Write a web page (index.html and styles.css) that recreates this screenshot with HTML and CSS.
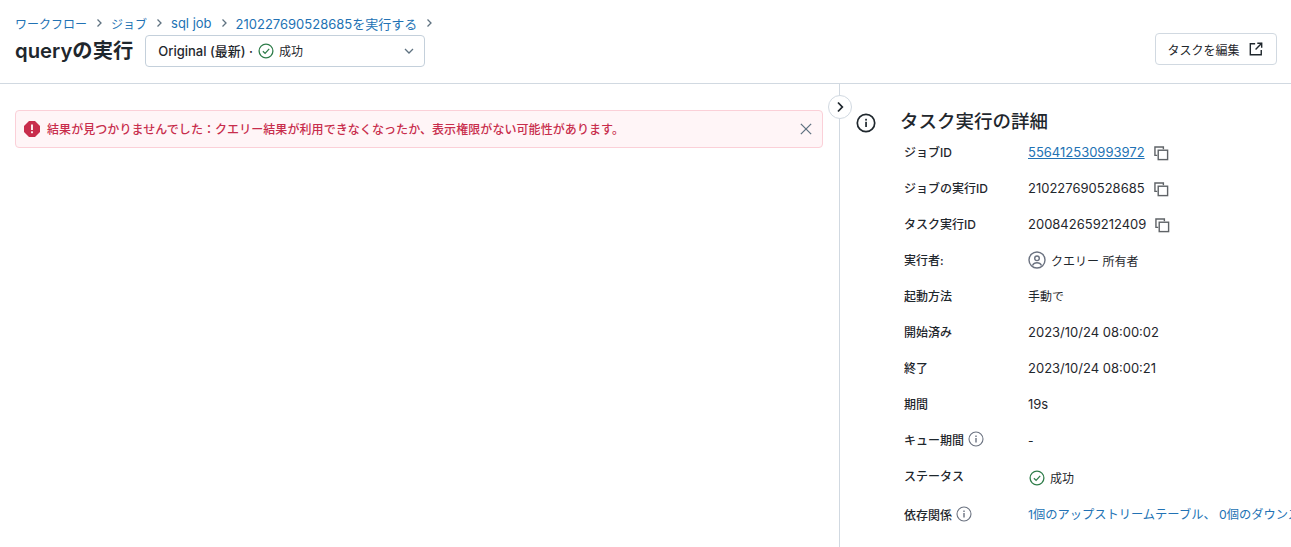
FILE: index.html
```html
<!DOCTYPE html>
<html lang="ja">

<head>
    <meta charset="utf-8">
    <title>queryの実行</title>
    <link rel="stylesheet" href="styles.css">
</head>

<body>
    <header class="page_header">
        <div class="header_left">
            <nav class="crumbs">
                <a class="link">ワークフロー</a>
                <svg class="crumb_sep" viewBox="0 0 8 10"><path d="M2.5 1.5 6 5 2.5 8.5"/></svg>
                <a class="link">ジョブ</a>
                <svg class="crumb_sep" viewBox="0 0 8 10"><path d="M2.5 1.5 6 5 2.5 8.5"/></svg>
                <a class="link big_text">sql job</a>
                <svg class="crumb_sep" viewBox="0 0 8 10"><path d="M2.5 1.5 6 5 2.5 8.5"/></svg>
                <a class="link big_text">210227690528685を実行する</a>
                <svg class="crumb_sep" viewBox="0 0 8 10"><path d="M2.5 1.5 6 5 2.5 8.5"/></svg>
            </nav>
            <div class="title_row">
                <h1>queryの実行</h1>
                <div class="run_select">
                    <span class="run_name">Original (最新) ·</span>
                    <svg class="ok_icon" viewBox="0 0 16 16"><circle cx="8" cy="8" r="6.9"/><path d="M4.9 8.2 7.1 10.4 11.2 5.9"/></svg>
                    <span class="run_status">成功</span>
                    <svg class="select_arrow" viewBox="0 0 10 6"><path d="M1 1 5 5 9 1"/></svg>
                </div>
            </div>
        </div>
        <button class="edit_button" type="button">
            タスクを編集
            <svg class="open_icon" viewBox="0 0 16 16"><path d="M7 2H1.500V14.500H14V9"/><path d="M9.500 1.500H14.500V6.500"/><path d="M14.500 1.500 7.500 8.500"/></svg>
        </button>
    </header>

    <main class="content">
        <section class="left_pane">
            <div class="alert">
                <svg class="alert_icon" viewBox="0 0 16 16"><path class="alert_shape" d="M5 0H11L16 5V11L11 16H5L0 11V5Z"/><rect class="alert_mark" x="7.100" y="3.500" width="1.800" height="5.500"/><rect class="alert_mark" x="7.100" y="10.300" width="1.800" height="1.900"/></svg>
                <span class="alert_text">結果が見つかりませんでした：クエリー結果が利用できなくなったか、表示権限がない可能性があります。</span>
                <svg class="alert_close" viewBox="0 0 14 14"><path d="M1 1 13 13M13 1 1 13"/></svg>
            </div>
        </section>

        <aside class="right_pane">
            <button class="collapse_button" type="button">
                <svg viewBox="0 0 8 12"><path d="M2 1.500 6.300 6 2 10.500"/></svg>
            </button>
            <div class="details_head">
                <svg class="head_icon" viewBox="0 0 20 20"><circle cx="10" cy="10" r="8.700"/><rect x="9.200" y="8.800" width="1.700" height="5.200"/><rect x="9.200" y="5.800" width="1.700" height="1.800"/></svg>
                <h2>タスク実行の詳細</h2>
            </div>
            <div class="details">
                <div class="label">ジョブID</div>
                <div class="value big_text"><a class="link underlined">556412530993972</a>
                    <svg class="copy_icon" viewBox="0 0 16 16"><path d="M10 3.500V1H1V10H3.500"/><rect x="4.500" y="4.500" width="10" height="10"/></svg>
                </div>
                <div class="label">ジョブの実行ID</div>
                <div class="value big_text">210227690528685
                    <svg class="copy_icon" viewBox="0 0 16 16"><path d="M10 3.500V1H1V10H3.500"/><rect x="4.500" y="4.500" width="10" height="10"/></svg>
                </div>
                <div class="label">タスク実行ID</div>
                <div class="value big_text">200842659212409
                    <svg class="copy_icon" viewBox="0 0 16 16"><path d="M10 3.500V1H1V10H3.500"/><rect x="4.500" y="4.500" width="10" height="10"/></svg>
                </div>
                <div class="label">実行者:</div>
                <div class="value">
                    <svg class="user_icon" viewBox="0 0 18 18"><circle cx="9" cy="9" r="8"/><circle cx="9" cy="7.300" r="2.300"/><path d="M4.500 14.500C5.500 12.300 7 11.700 9 11.700S12.500 12.300 13.500 14.500"/></svg>
                    クエリー 所有者
                </div>
                <div class="label">起動方法</div>
                <div class="value cjk_value">手動で</div>
                <div class="label">開始済み</div>
                <div class="value big_text">2023/10/24 08:00:02</div>
                <div class="label">終了</div>
                <div class="value big_text">2023/10/24 08:00:21</div>
                <div class="label">期間</div>
                <div class="value big_text">19s</div>
                <div class="label">キュー期間
                    <svg class="hint_icon" viewBox="0 0 16 16"><circle cx="8" cy="8" r="7"/><rect x="7.300" y="7" width="1.400" height="4.500"/><rect x="7.300" y="4.500" width="1.400" height="1.500"/></svg>
                </div>
                <div class="value">-</div>
                <div class="label">ステータス</div>
                <div class="value status_value">
                    <svg class="ok_icon" viewBox="0 0 16 16"><circle cx="8" cy="8" r="6.900"/><path d="M4.900 8.200 7.100 10.400 11.200 5.900"/></svg>
                    成功
                </div>
                <div class="label low_row">依存関係
                    <svg class="hint_icon" viewBox="0 0 16 16"><circle cx="8" cy="8" r="7"/><rect x="7.300" y="7" width="1.400" height="4.500"/><rect x="7.300" y="4.500" width="1.400" height="1.500"/></svg>
                </div>
                <div class="value low_row depend_value"><a class="link">1個のアップストリームテーブル、 0個のダウンストリームテーブル</a></div>
            </div>
        </aside>
    </main>
</body>

</html>
```

FILE: styles.css
```css
html, body {
    height: 100%;
    overflow: hidden;
}

body {
    margin: 0;
    background-color: #ffffff;
    color: #1f272d;
    font-family: Inter, "Noto Sans CJK JP", sans-serif;
    font-size: 12px;
}

.link {
    color: #2272b4;
    text-decoration: none;
}

.underlined {
    text-decoration: underline;
}

.page_header {
    box-sizing: border-box;
    display: flex;
    justify-content: space-between;
    height: 84px;
    padding: 14px 14px 0 15px;
    border-bottom: 1px solid #d1d9e1;
}

.crumbs {
    display: flex;
    align-items: center;
    height: 18px;
    font-size: 12px;
}

.crumbs .big_text {
    font-size: 13px;
}

.crumb_sep {
    width: 8px;
    height: 10px;
    margin: 0 8px;
    fill: none;
    stroke: #5f7281;
    stroke-width: 1.300;
}

.title_row {
    display: flex;
    align-items: center;
    margin-top: 3px;
}

h1 {
    margin: 0 12px 0 0;
    font-size: 20.300px;
    font-weight: 600;
    line-height: 32px;
}

.run_select {
    box-sizing: border-box;
    display: flex;
    align-items: center;
    width: 280px;
    height: 32px;
    padding: 0 10px 1px 12px;
    border: 1px solid #c4d0db;
    border-radius: 4px;
}

.run_name {
    font-size: 13px;
    font-weight: 500;
}

.run_status {
    font-size: 12px;
}

.ok_icon {
    width: 16px;
    height: 16px;
    margin: 0 5px;
    fill: none;
    stroke: #2f7d4a;
    stroke-width: 1.300;
}

.select_arrow {
    width: 10px;
    height: 6px;
    margin-left: auto;
    fill: none;
    stroke: #5f7281;
    stroke-width: 1.300;
}

.edit_button {
    display: flex;
    align-items: center;
    justify-content: center;
    gap: 9px;
    box-sizing: border-box;
    width: 122px;
    height: 32px;
    margin-top: 19px;
    padding: 0 2px 0 0;
    border: 1px solid #d1d9e1;
    border-radius: 4px;
    background-color: #ffffff;
    color: #1f272d;
    font-family: inherit;
    font-size: 12px;
}

.open_icon {
    width: 14px;
    height: 14px;
    fill: none;
    stroke: #1f272d;
    stroke-width: 1.600;
}

.content {
    display: flex;
    height: 463px;
}

.left_pane {
    box-sizing: border-box;
    width: 840px;
    padding: 26px 16px 0 15px;
    border-right: 1px solid #d1d9e1;
}

.alert {
    box-sizing: border-box;
    display: flex;
    align-items: center;
    height: 38px;
    padding: 0 10px 0 8px;
    border: 1px solid #fbd0d8;
    border-radius: 4px;
    background-color: #fff5f7;
}

.alert_icon {
    width: 16px;
    height: 16px;
    margin-right: 7px;
}

.alert_shape {
    fill: #c82d4c;
}

.alert_mark {
    fill: #ffffff;
}

.alert_text {
    padding-bottom: 1px;
    color: #c82d4c;
    font-size: 12px;
    font-weight: 500;
    letter-spacing: 0.070px;
}

.alert_close {
    width: 12px;
    height: 12px;
    margin-left: auto;
    fill: none;
    stroke: #5f7281;
    stroke-width: 1.500;
}

.right_pane {
    position: relative;
    flex: 1;
    min-width: 0;
    padding-left: 16px;
}

.collapse_button {
    position: absolute;
    top: 11px;
    left: -12px;
    display: flex;
    align-items: center;
    justify-content: center;
    box-sizing: border-box;
    width: 24px;
    height: 24px;
    padding: 0;
    border: 1px solid #d1d9e1;
    border-radius: 50%;
    background-color: #ffffff;
}

.collapse_button svg {
    width: 8px;
    height: 12px;
    fill: none;
    stroke: #1f272d;
    stroke-width: 1.800;
}

.details_head {
    display: flex;
    align-items: center;
    height: 26px;
    margin-top: 24px;
}

.head_icon {
    width: 20px;
    height: 20px;
    margin-top: 4px;
    margin-right: 24px;
    fill: none;
    stroke: #1f272d;
    stroke-width: 1.700;
}

.head_icon rect {
    fill: #1f272d;
    stroke: none;
}

h2 {
    margin: 0;
    font-size: 18.500px;
    font-weight: 500;
    line-height: 26px;
}

.details {
    display: grid;
    grid-template-columns: 124px 1fr;
    grid-auto-rows: 36px;
    margin-left: 48px;
    overflow: hidden;
    white-space: nowrap;
}

.label {
    display: flex;
    align-items: center;
    gap: 4px;
    padding-bottom: 2px;
    box-sizing: border-box;
    font-size: 12px;
    font-weight: 500;
}

.value {
    display: flex;
    align-items: center;
    font-size: 12px;
}

.details .big_text {
    font-size: 13px;
}

.cjk_value {
    padding-bottom: 2px;
}

.status_value {
    padding-top: 3px;
}

.details .low_row {
    padding-top: 4px;
    padding-bottom: 0;
}

.depend_value {
    font-size: 12.250px;
}

.copy_icon {
    width: 15px;
    height: 15px;
    margin-top: 3px;
    margin-left: 9px;
    fill: none;
    stroke: #5f6367;
    stroke-width: 1.500;
}

.user_icon {
    width: 18px;
    height: 18px;
    margin-right: 5px;
    fill: none;
    stroke: #6b7280;
    stroke-width: 1.400;
}

.hint_icon {
    width: 16px;
    height: 16px;
    fill: none;
    stroke: #6b7280;
    stroke-width: 1.100;
}

.hint_icon rect {
    fill: #6b7280;
    stroke: none;
}

.value .ok_icon {
    margin: 0 5px 0 1px;
}
```
